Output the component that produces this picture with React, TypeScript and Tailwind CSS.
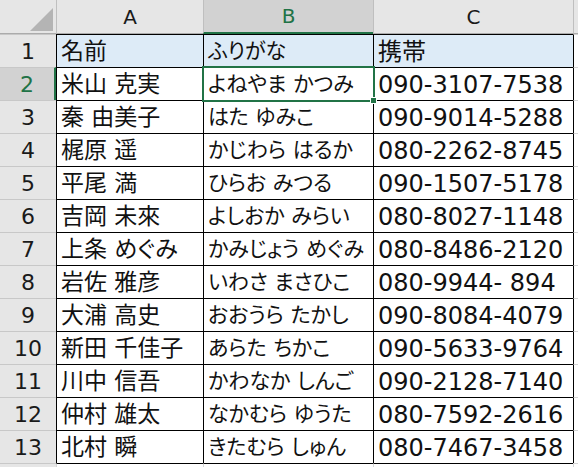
import React from "react";

const rows = [
  ["名前", "ふりがな", "携帯"],
  ["米山 克実", "よねやま かつみ", "090-3107-7538"],
  ["秦 由美子", "はた ゆみこ", "090-9014-5288"],
  ["梶原 遥", "かじわら はるか", "080-2262-8745"],
  ["平尾 満", "ひらお みつる", "090-1507-5178"],
  ["吉岡 未來", "よしおか みらい", "080-8027-1148"],
  ["上条 めぐみ", "かみじょう めぐみ", "080-8486-2120"],
  ["岩佐 雅彦", "いわさ まさひこ", "080-9944- 894"],
  ["大浦 高史", "おおうら たかし", "090-8084-4079"],
  ["新田 千佳子", "あらた ちかこ", "090-5633-9764"],
  ["川中 信吾", "かわなか しんご", "090-2128-7140"],
  ["仲村 雄太", "なかむら ゆうた", "080-7592-2616"],
  ["北村 瞬", "きたむら しゅん", "080-7467-3458"],
];

const font = { fontFamily: '"DejaVu Sans", "Noto Sans CJK JP", sans-serif' };

// per-column text size (A: kanji names, B: kana, C: phone digits)
const colText = [
  " text-[23px] [font-feature-settings:'palt']",
  " text-[21px] [font-feature-settings:'palt']",
  " text-[24px]",
];

function ColHeader({ label, selected }: { label: string; selected?: boolean }) {
  return (
    <div
      className={
        "flex items-center justify-center border-l border-[#bfbfbf] text-[20px] " +
        (selected
          ? "bg-[#d2d2d2] text-[#217346] border-b-2 border-b-[#217346]"
          : "bg-[#e6e6e6] text-[#1a1a1a] border-b border-b-[#ababab]")
      }
    >
      {label}
    </div>
  );
}

export default function App() {
  return (
    <div className="relative w-[578px] h-[468px] overflow-hidden bg-white" style={font}>
      <div className="grid grid-cols-[56px_147px_170px_200px_5px] grid-rows-[34px_repeat(13,33px)_4px]">
        {/* corner */}
        <div className="flex items-end justify-end pr-[3px] pb-[2px] bg-[#e6e6e6] border-b border-[#ababab]">
          <svg width="23" height="23" viewBox="0 0 23 23">
            <polygon points="0,23 23,23 23,0" fill="#b4b4b4" />
          </svg>
        </div>
        <ColHeader label="A" />
        <ColHeader label="B" selected />
        <ColHeader label="C" />
        <div className="bg-[#e6e6e6] border-l border-[#bfbfbf] border-b border-b-[#ababab]" />

        {rows.map((r, i) => {
          const sel = i === 1;
          const fill = i === 0 ? "bg-[#ddebf7]" : "bg-white";
          return (
            <React.Fragment key={i}>
              <div
                className={
                  "flex items-center justify-center border-t border-[#c8c8c8] text-[22px] " +
                  (sel
                    ? "bg-[#d2d2d2] text-[#217346] border-r-2 border-r-[#217346]"
                    : "bg-[#e6e6e6] text-[#1a1a1a]")
                }
              >
                {i + 1}
              </div>
              {r.map((c, j) => (
                <div
                  key={j}
                  className={
                    "flex items-center overflow-hidden whitespace-pre border-l border-t border-black pl-[4px] pt-[1px] text-[#111] " +
                    fill +
                    colText[j]
                  }
                >
                  {c}
                </div>
              ))}
              <div className="border-l border-black border-t border-t-[#d4d4d4]" />
            </React.Fragment>
          );
        })}

        {/* partial row 14 */}
        <div className="bg-[#e6e6e6] border-t border-[#c8c8c8]" />
        <div className="border-l border-[#d4d4d4] border-t border-t-black" />
        <div className="border-l border-[#d4d4d4] border-t border-t-black" />
        <div className="border-l border-[#d4d4d4] border-t border-t-black" />
        <div className="border-l border-t border-[#d4d4d4]" />
      </div>

      {/* active cell B2 */}
      <div className="absolute left-[202px] top-[66px] w-[173px] h-[36px] border-2 border-[#217346]">
        <span className="absolute left-[166px] top-[29px] w-[7px] h-[7px] bg-[#217346] border border-white" />
      </div>
    </div>
  );
}
